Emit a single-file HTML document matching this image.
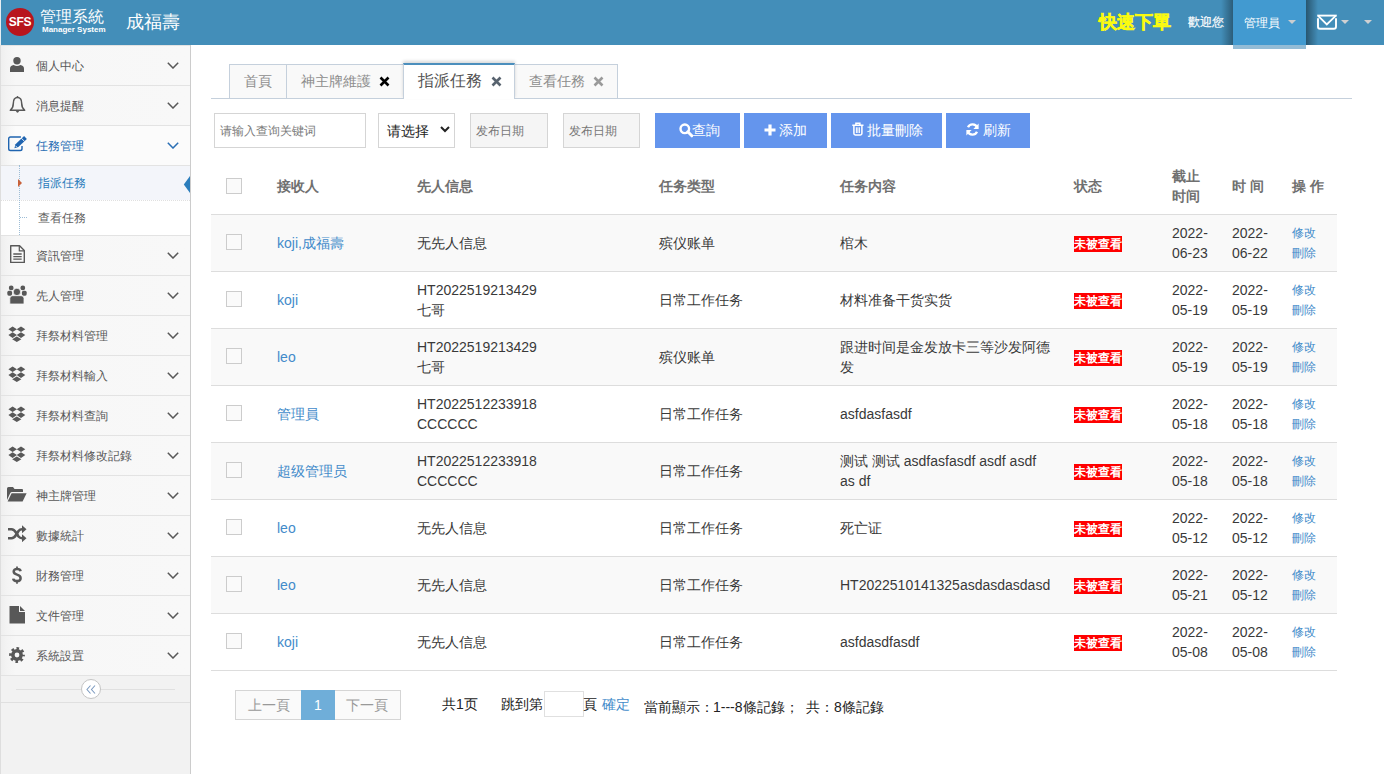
<!DOCTYPE html>
<html><head><meta charset="utf-8">
<style>
*{box-sizing:border-box}
html,body{margin:0;padding:0;width:1384px;height:774px;overflow:hidden;background:#fff;font-family:"Liberation Sans",sans-serif;font-size:13px;color:#393939}
.abs{position:absolute}
#nav{position:absolute;left:0;top:0;width:1384px;height:45px;background:#438eb9;z-index:10}
#side{position:absolute;left:0;top:45px;width:191px;height:729px;background:#f2f2f2;border-right:1px solid #ccc}
.mi{position:absolute;left:0;width:190px;height:40px;background:linear-gradient(90deg,#eeeeee 0px,#f3f3f3 6px,#f7f7f7 16px,#f8f8f8 100%);border-top:1px solid #e3e3e3}
.st{position:absolute;left:36px;font-size:12px;line-height:16px;white-space:nowrap}
.mi .ic{position:absolute;left:8px;top:11px;width:18px;height:18px}
.mi .ar{position:absolute;left:166px;top:14px;width:12px;height:12px}
#main{position:absolute;left:191px;top:45px;width:1193px;height:729px;background:#fff}
</style></head><body>
<div id="nav">
 <div class="abs" style="left:0;top:0;width:1px;height:45px;background:#e8eef2"></div>
 <div class="abs" style="left:6px;top:8px;width:28px;height:28px;border-radius:50%;background:#b8151d"></div>
 <div class="abs" style="left:6px;top:14px;width:28px;text-align:center;color:#fff;font-weight:bold;font-size:12px;line-height:16px;letter-spacing:-0.2px">SFS</div>
 <div class="abs" style="left:40px;top:7px;color:#fff;font-size:16px;line-height:19px;white-space:nowrap">管理系統</div>
 <div class="abs" style="left:42px;top:25px;color:#fff;font-size:8px;font-weight:bold;line-height:10px;white-space:nowrap;letter-spacing:0px">Manager System</div>
 <div class="abs" style="left:126px;top:11px;color:#fff;font-size:18px;line-height:22px;white-space:nowrap">成福壽</div>
 <div class="abs" style="left:1099px;top:11px;color:#fafa10;font-size:18px;font-weight:bold;line-height:22px;white-space:nowrap;-webkit-text-stroke:0.5px #fafa10">快速下單</div>
 <div class="abs" style="left:1188px;top:14px;color:#fff;font-size:12px;line-height:16px;white-space:nowrap;-webkit-text-stroke:0.2px #fff">歡迎您</div>
 <div class="abs" style="left:1221px;top:0;width:12px;height:45px;background:linear-gradient(90deg,rgba(0,0,0,0),rgba(0,0,0,.35))"></div>
 <div class="abs" style="left:1306px;top:0;width:12px;height:45px;background:linear-gradient(270deg,rgba(0,0,0,0),rgba(0,0,0,.4))"></div>
 <div class="abs" style="left:1233px;top:0;width:73px;height:49px;background:#93bcd6"></div>
 <div class="abs" style="left:1233px;top:0;width:73px;height:45px;background:#429ad0"></div>
 <div class="abs" style="left:1244px;top:15px;color:#fff;font-size:12px;line-height:16px;white-space:nowrap">管理員</div>
 <div class="abs" style="left:1288px;top:20px;width:0;height:0;border-left:4px solid transparent;border-right:4px solid transparent;border-top:4px solid #c9cdd0"></div>
 <svg class="abs" style="left:1317px;top:14px" width="20" height="17" viewBox="0 0 20 17"><path d="M0.2 1.6 H19.8" stroke="#fff" stroke-width="1.9"/><path d="M1.2 1.9 L9.8 10.4 L18.6 1.9" fill="none" stroke="#fff" stroke-width="1.8"/><path d="M1 4.3 V12.8 Q1 14.8 3 14.8 H17 Q19 14.8 19 12.8 V4.3" fill="none" stroke="#fff" stroke-width="1.9"/></svg>
 <div class="abs" style="left:1341px;top:20px;width:0;height:0;border-left:4px solid transparent;border-right:4px solid transparent;border-top:4px solid #cfd0d2"></div>
 <div class="abs" style="left:1364px;top:20px;width:0;height:0;border-left:4px solid transparent;border-right:4px solid transparent;border-top:4px solid #cfd0d2"></div>
</div>
<div id="side"></div>
<div class="mi" style="top:45px"></div><svg class="abs" style="left:10px;top:57px" width="14" height="15" viewBox="0 0 14 15"><circle cx="7" cy="3.7" r="3.7" fill="#585858"/><path d="M0 15 L0 11.8 Q0 8.3 3.6 7.9 Q7 10.2 10.4 7.9 Q14 8.3 14 11.8 L14 15 Z" fill="#585858"/></svg><div class="abs st" style="top:58px;color:#585858">個人中心</div><svg class="abs" style="left:167px;top:62px" width="12" height="7" viewBox="0 0 12 7"><path d="M0.8 0.8 L6 6 L11.2 0.8" fill="none" stroke="#585858" stroke-width="1.5"/></svg><div class="mi" style="top:85px"></div><svg class="abs" style="left:9px;top:95px" width="17" height="20" viewBox="0 0 17 20"><path d="M8.5 2.6 C5.2 2.6 4.3 5 4.3 8.5 C4.3 12 3.3 13.6 1.3 15.3 L15.7 15.3 C13.7 13.6 12.7 12 12.7 8.5 C12.7 5 11.8 2.6 8.5 2.6 Z" fill="none" stroke="#585858" stroke-width="1.5" stroke-linejoin="round"/><circle cx="8.5" cy="1.9" r="0.9" fill="#585858"/><path d="M6.8 16 Q8.5 19.6 10.2 16 Z" fill="#585858"/></svg><div class="abs st" style="top:98px;color:#585858">消息提醒</div><svg class="abs" style="left:167px;top:102px" width="12" height="7" viewBox="0 0 12 7"><path d="M0.8 0.8 L6 6 L11.2 0.8" fill="none" stroke="#585858" stroke-width="1.5"/></svg><div class="mi" style="top:125px;background:linear-gradient(90deg,#efefef 0px,#f6f6f6 8px,#fbfbfb 16px,#fbfbfb 100%)"></div><svg class="abs" style="left:8px;top:136px" width="20" height="16" viewBox="0 0 20 16"><path d="M12.9 1 L2.5 1 Q0.7 1 0.7 2.8 L0.7 12.7 Q0.7 14.5 2.5 14.5 L12.2 14.5 Q14 14.5 14 12.7 L14 10" fill="none" stroke="#1f64b0" stroke-width="1.4"/><path d="M6.4 12.2 L7.5 8.3 L16.1 0.1 L18.9 2.9 L10.3 11.1 Z" fill="#1f64b0"/><path d="M13.4 2.2 L16.6 5.5" stroke="#f8f8f8" stroke-width="0.9"/><path d="M7.6 9.9 L8.6 10.9" stroke="#f8f8f8" stroke-width="1"/></svg><div class="abs st" style="top:138px;color:#2a6fb5">任務管理</div><svg class="abs" style="left:167px;top:142px" width="12" height="7" viewBox="0 0 12 7"><path d="M0.8 0.8 L6 6 L11.2 0.8" fill="none" stroke="#2a6fb5" stroke-width="1.5"/></svg><div class="abs" style="left:0;top:165px;width:190px;height:70px;background:#fff"></div><div class="abs" style="left:0;top:165px;width:190px;height:35px;background:#f3f5fa"></div><div class="abs" style="left:0;top:165px;width:190px;height:1px;background:#e3e3e3"></div><div class="abs" style="left:0;top:200px;width:190px;height:0;border-top:1px dotted #e0e0e0"></div><div class="abs" style="left:19px;top:165px;width:0;height:70px;border-left:1px dotted #9dbdd6"></div><div class="abs" style="left:20px;top:217px;width:7px;height:0;border-top:1px dotted #9dbdd6"></div><div class="abs" style="left:18px;top:179px;width:0;height:0;border-top:4px solid transparent;border-bottom:4px solid transparent;border-left:4px solid #c86139"></div><div class="abs st" style="left:38px;top:175px;color:#2b7dbc">指派任務</div><div class="abs st" style="left:38px;top:210px;color:#616161">查看任務</div><svg class="abs" style="left:183px;top:176px" width="8" height="17" viewBox="0 0 8 17"><path d="M7 0 L0.8 8.5 L7 17 Z" fill="#2b7dbc"/></svg><div class="mi" style="top:235px"></div><svg class="abs" style="left:9px;top:245px" width="17" height="19" viewBox="0 0 17 19"><path d="M1.7 0.8 L10.6 0.8 L15.3 5.5 L15.3 17.4 L1.7 17.4 Z" fill="none" stroke="#585858" stroke-width="1.4" stroke-linejoin="round"/><path d="M10.3 1 L10.3 5.8 L15 5.8" fill="none" stroke="#585858" stroke-width="1.2"/><path d="M4.3 9 H12.7 M4.3 11.6 H12.7 M4.3 14.2 H12.7" stroke="#585858" stroke-width="1.3"/></svg><div class="abs st" style="top:248px;color:#585858">資訊管理</div><svg class="abs" style="left:167px;top:252px" width="12" height="7" viewBox="0 0 12 7"><path d="M0.8 0.8 L6 6 L11.2 0.8" fill="none" stroke="#585858" stroke-width="1.5"/></svg><div class="mi" style="top:275px"></div><svg class="abs" style="left:7px;top:285px" width="20" height="20" viewBox="0 0 20 20"><circle cx="4.2" cy="2.9" r="2.4" fill="#585858"/><circle cx="15.8" cy="2.9" r="2.4" fill="#585858"/><rect x="0.3" y="5.8" width="4.8" height="4.9" rx="1.6" fill="#585858"/><rect x="14.9" y="5.8" width="4.8" height="4.9" rx="1.6" fill="#585858"/><circle cx="9.9" cy="6.9" r="3.7" fill="#585858" stroke="#f8f8f8" stroke-width="0.8"/><path d="M2.8 19 L2.8 13.5 Q2.8 10.7 5.6 10.7 L14.2 10.7 Q17 10.7 17 13.5 L17 19 Z" fill="#585858" stroke="#f8f8f8" stroke-width="0.8"/></svg><div class="abs st" style="top:288px;color:#585858">先人管理</div><svg class="abs" style="left:167px;top:292px" width="12" height="7" viewBox="0 0 12 7"><path d="M0.8 0.8 L6 6 L11.2 0.8" fill="none" stroke="#585858" stroke-width="1.5"/></svg><div class="mi" style="top:315px"></div><svg class="abs" style="left:8px;top:326px" width="18" height="17" viewBox="0 0 18 17"><path d="M4.6 0.5 L8.9 3.2 L4.6 6 L0.4 3.2 Z M13 0.5 L17.3 3.2 L13 6 L8.7 3.2 Z M4.6 6.3 L8.9 9.1 L4.6 11.9 L0.4 9.1 Z M13 6.3 L17.3 9.1 L13 11.9 L8.7 9.1 Z M8.8 10.6 L13.4 13.3 L8.8 16 L4.2 13.3 Z" fill="#585858"/></svg><div class="abs st" style="top:328px;color:#585858">拜祭材料管理</div><svg class="abs" style="left:167px;top:332px" width="12" height="7" viewBox="0 0 12 7"><path d="M0.8 0.8 L6 6 L11.2 0.8" fill="none" stroke="#585858" stroke-width="1.5"/></svg><div class="mi" style="top:355px"></div><svg class="abs" style="left:8px;top:366px" width="18" height="17" viewBox="0 0 18 17"><path d="M4.6 0.5 L8.9 3.2 L4.6 6 L0.4 3.2 Z M13 0.5 L17.3 3.2 L13 6 L8.7 3.2 Z M4.6 6.3 L8.9 9.1 L4.6 11.9 L0.4 9.1 Z M13 6.3 L17.3 9.1 L13 11.9 L8.7 9.1 Z M8.8 10.6 L13.4 13.3 L8.8 16 L4.2 13.3 Z" fill="#585858"/></svg><div class="abs st" style="top:368px;color:#585858">拜祭材料輸入</div><svg class="abs" style="left:167px;top:372px" width="12" height="7" viewBox="0 0 12 7"><path d="M0.8 0.8 L6 6 L11.2 0.8" fill="none" stroke="#585858" stroke-width="1.5"/></svg><div class="mi" style="top:395px"></div><svg class="abs" style="left:8px;top:406px" width="18" height="17" viewBox="0 0 18 17"><path d="M4.6 0.5 L8.9 3.2 L4.6 6 L0.4 3.2 Z M13 0.5 L17.3 3.2 L13 6 L8.7 3.2 Z M4.6 6.3 L8.9 9.1 L4.6 11.9 L0.4 9.1 Z M13 6.3 L17.3 9.1 L13 11.9 L8.7 9.1 Z M8.8 10.6 L13.4 13.3 L8.8 16 L4.2 13.3 Z" fill="#585858"/></svg><div class="abs st" style="top:408px;color:#585858">拜祭材料查詢</div><svg class="abs" style="left:167px;top:412px" width="12" height="7" viewBox="0 0 12 7"><path d="M0.8 0.8 L6 6 L11.2 0.8" fill="none" stroke="#585858" stroke-width="1.5"/></svg><div class="mi" style="top:435px"></div><svg class="abs" style="left:8px;top:446px" width="18" height="17" viewBox="0 0 18 17"><path d="M4.6 0.5 L8.9 3.2 L4.6 6 L0.4 3.2 Z M13 0.5 L17.3 3.2 L13 6 L8.7 3.2 Z M4.6 6.3 L8.9 9.1 L4.6 11.9 L0.4 9.1 Z M13 6.3 L17.3 9.1 L13 11.9 L8.7 9.1 Z M8.8 10.6 L13.4 13.3 L8.8 16 L4.2 13.3 Z" fill="#585858"/></svg><div class="abs st" style="top:448px;color:#585858">拜祭材料修改記錄</div><svg class="abs" style="left:167px;top:452px" width="12" height="7" viewBox="0 0 12 7"><path d="M0.8 0.8 L6 6 L11.2 0.8" fill="none" stroke="#585858" stroke-width="1.5"/></svg><div class="mi" style="top:475px"></div><svg class="abs" style="left:7px;top:487px" width="20" height="15" viewBox="0 0 20 15"><path d="M0 1.5 Q0 0 1.5 0 L6 0 L7.5 2 L15 2 Q16 2 16 3 L16 5 L5 5 Q3.8 5 3.2 6.2 L0 13 Z" fill="#585858"/><path d="M4.6 6.3 L19.6 6.3 L15.6 14.4 L0.6 14.4 Z" fill="#585858"/></svg><div class="abs st" style="top:488px;color:#585858">神主牌管理</div><svg class="abs" style="left:167px;top:492px" width="12" height="7" viewBox="0 0 12 7"><path d="M0.8 0.8 L6 6 L11.2 0.8" fill="none" stroke="#585858" stroke-width="1.5"/></svg><div class="mi" style="top:515px"></div><svg class="abs" style="left:8px;top:525px" width="19" height="17" viewBox="0 0 19 17"><path d="M0 4.3 L3.5 4.3 Q6 4.3 8 7.5 L10.5 11.5 Q12 13.2 14 13.2 L15 13.2" fill="none" stroke="#585858" stroke-width="2.6"/><path d="M0 13.2 L3.5 13.2 Q6 13.2 8 10 L10.5 6 Q12 4.3 14 4.3 L15 4.3" fill="none" stroke="#585858" stroke-width="2.6"/><path d="M14 0.3 L18.5 4.3 L14 8.3 Z M14 9.2 L18.5 13.2 L14 17.2 Z" fill="#585858"/></svg><div class="abs st" style="top:528px;color:#585858">數據統計</div><svg class="abs" style="left:167px;top:532px" width="12" height="7" viewBox="0 0 12 7"><path d="M0.8 0.8 L6 6 L11.2 0.8" fill="none" stroke="#585858" stroke-width="1.5"/></svg><div class="mi" style="top:555px"></div><svg class="abs" style="left:12px;top:566px" width="10" height="19" viewBox="0 0 10 19"><path d="M8.6 5.2 Q8.2 3.1 5 3.1 Q1.7 3.1 1.7 5.6 Q1.7 7.8 5 8.6 Q8.6 9.4 8.6 12.2 Q8.6 15.1 5 15.1 Q1.6 15.1 1.2 12.6" fill="none" stroke="#585858" stroke-width="2.5"/><path d="M5 0.5 V3.2 M5 15 V17.8" stroke="#585858" stroke-width="1.7"/></svg><div class="abs st" style="top:568px;color:#585858">財務管理</div><svg class="abs" style="left:167px;top:572px" width="12" height="7" viewBox="0 0 12 7"><path d="M0.8 0.8 L6 6 L11.2 0.8" fill="none" stroke="#585858" stroke-width="1.5"/></svg><div class="mi" style="top:595px"></div><svg class="abs" style="left:9px;top:606px" width="17" height="18" viewBox="0 0 17 18"><path d="M0.5 0 L10 0 L10 6 L16 6 L16 17.5 L0.5 17.5 Z" fill="#585858"/><path d="M11 0 L16 5 L11 5 Z" fill="#585858"/></svg><div class="abs st" style="top:608px;color:#585858">文件管理</div><svg class="abs" style="left:167px;top:612px" width="12" height="7" viewBox="0 0 12 7"><path d="M0.8 0.8 L6 6 L11.2 0.8" fill="none" stroke="#585858" stroke-width="1.5"/></svg><div class="mi" style="top:635px"></div><svg class="abs" style="left:9px;top:647px" width="16" height="16" viewBox="0 0 16 16"><circle cx="8" cy="8" r="4.15" fill="none" stroke="#585858" stroke-width="3.5"/><circle cx="8" cy="8" r="6.3" fill="none" stroke="#585858" stroke-width="3.2" stroke-dasharray="2.5 2.447" stroke-dashoffset="1.25"/></svg><div class="abs st" style="top:648px;color:#585858">系統設置</div><svg class="abs" style="left:167px;top:652px" width="12" height="7" viewBox="0 0 12 7"><path d="M0.8 0.8 L6 6 L11.2 0.8" fill="none" stroke="#585858" stroke-width="1.5"/></svg><div class="abs" style="left:0;top:675px;width:190px;height:28px;background:#f2f2f2;border-top:1px solid #e3e3e3;border-bottom:1px solid #e0e0e0"></div><div class="abs" style="left:0;top:45px;width:1px;height:729px;background:#dedede"></div><div class="abs" style="left:16px;top:689px;width:159px;height:1px;background:#e0e0e0"></div><div class="abs" style="left:81px;top:679px;width:20px;height:20px;border-radius:50%;background:#fff;border:1px solid #c4c4c4"></div><svg class="abs" style="left:86px;top:685px" width="10" height="9" viewBox="0 0 10 9"><path d="M4.5 0.5 L1 4.5 L4.5 8.5 M9 0.5 L5.5 4.5 L9 8.5" fill="none" stroke="#7f9cc0" stroke-width="1.1"/></svg>
<div id="main"></div>
<div class="abs" style="left:211px;top:98px;width:1141px;height:1px;background:#c5d0dc"></div><div class="abs" style="left:229px;top:64px;width:58px;height:35px;background:#f9f9f9;border:1px solid #c5d0dc"></div><div class="abs" style="left:244px;top:72px;font-size:14px;line-height:18px;color:#8d8d8d;white-space:nowrap">首頁</div><div class="abs" style="left:286px;top:64px;width:118px;height:35px;background:#f9f9f9;border:1px solid #c5d0dc"></div><div class="abs" style="left:301px;top:72px;font-size:14px;line-height:18px;color:#8d8d8d;white-space:nowrap">神主牌維護</div><svg class="abs" style="left:379px;top:76px" width="11" height="11" viewBox="0 0 11 11"><path d="M1.5 1.5 L9.5 9.5 M9.5 1.5 L1.5 9.5" stroke="#000" stroke-width="2.6" stroke-linecap="butt"/></svg><div class="abs" style="left:514px;top:64px;width:104px;height:35px;background:#f9f9f9;border:1px solid #c5d0dc"></div><div class="abs" style="left:529px;top:72px;font-size:14px;line-height:18px;color:#8d8d8d;white-space:nowrap">查看任務</div><svg class="abs" style="left:593px;top:76px" width="11" height="11" viewBox="0 0 11 11"><path d="M1.5 1.5 L9.5 9.5 M9.5 1.5 L1.5 9.5" stroke="#9a9a9a" stroke-width="2.6" stroke-linecap="butt"/></svg><div class="abs" style="left:403px;top:63px;width:112px;height:36px;background:#fff;border:1px solid #c5d0dc;border-top:2px solid #4c8fbd;border-bottom:0;box-shadow:0 -2px 3px rgba(0,0,0,.15)"></div><div class="abs" style="left:418px;top:71px;font-size:16px;line-height:20px;color:#555;white-space:nowrap">指派任務</div><svg class="abs" style="left:491px;top:76px" width="11" height="11" viewBox="0 0 11 11"><path d="M1.5 1.5 L9.5 9.5 M9.5 1.5 L1.5 9.5" stroke="#58636f" stroke-width="2.6" stroke-linecap="butt"/></svg><div class="abs" style="left:214px;top:113px;width:152px;height:35px;border:1px solid #d5d5d5;background:#fff"></div><div class="abs" style="left:220px;top:123px;font-size:12px;line-height:16px;color:#7a7a7a;white-space:nowrap">请输入查询关键词</div><div class="abs" style="left:378px;top:113px;width:77px;height:35px;border:1px solid #d5d5d5;background:#fff"></div><div class="abs" style="left:387px;top:122px;font-size:14px;line-height:18px;color:#222;white-space:nowrap">请选择</div><svg class="abs" style="left:440px;top:126px" width="10" height="7" viewBox="0 0 10 7"><path d="M1 1 L5 5 L9 1" fill="none" stroke="#222" stroke-width="2"/></svg><div class="abs" style="left:470px;top:113px;width:78px;height:35px;border:1px solid #d5d5d5;background:#f5f5f5"></div><div class="abs" style="left:476px;top:123px;font-size:12px;line-height:16px;color:#777;white-space:nowrap">发布日期</div><div class="abs" style="left:563px;top:113px;width:77px;height:35px;border:1px solid #d5d5d5;background:#f5f5f5"></div><div class="abs" style="left:569px;top:123px;font-size:12px;line-height:16px;color:#777;white-space:nowrap">发布日期</div><div class="abs" style="left:655px;top:113px;width:85px;height:35px;background:#6495ed"></div><div class="abs" style="left:692px;top:121px;font-size:14px;line-height:18px;color:#fff;white-space:nowrap">查詢</div><div class="abs" style="left:744px;top:113px;width:83px;height:35px;background:#6495ed"></div><div class="abs" style="left:779px;top:121px;font-size:14px;line-height:18px;color:#fff;white-space:nowrap">添加</div><div class="abs" style="left:831px;top:113px;width:111px;height:35px;background:#6495ed"></div><div class="abs" style="left:867px;top:121px;font-size:14px;line-height:18px;color:#fff;white-space:nowrap">批量刪除</div><div class="abs" style="left:946px;top:113px;width:84px;height:35px;background:#6495ed"></div><div class="abs" style="left:983px;top:121px;font-size:14px;line-height:18px;color:#fff;white-space:nowrap">刷新</div><svg class="abs" style="left:679px;top:123px" width="14" height="15" viewBox="0 0 14 15"><circle cx="5.8" cy="5.8" r="4.3" fill="none" stroke="#fff" stroke-width="2.4"/><path d="M8.8 8.8 L12.8 12.8" stroke="#fff" stroke-width="3" stroke-linecap="round"/></svg><svg class="abs" style="left:764px;top:124px" width="12" height="12" viewBox="0 0 12 12"><path d="M6 0.5 V11.5 M0.5 6 H11.5" stroke="#fff" stroke-width="3.2"/></svg><svg class="abs" style="left:852px;top:122px" width="12" height="14" viewBox="0 0 12 14"><path d="M0.3 3.2 H11.5 M3.9 3 V1.2 H7.9 V3" fill="none" stroke="#fff" stroke-width="1.5"/><path d="M1.9 3.5 V11.6 Q1.9 13 3.3 13 H8.5 Q9.9 13 9.9 11.6 V3.5" fill="none" stroke="#fff" stroke-width="1.5"/><path d="M4.4 5.3 V11 M5.9 5.3 V11 M7.4 5.3 V11" stroke="#fff" stroke-width="1"/></svg><svg class="abs" style="left:966px;top:123px" width="13" height="13" viewBox="0 0 13 13"><path d="M11.2 4.6 A5 5 0 0 0 2 4.2" fill="none" stroke="#fff" stroke-width="2.3"/><path d="M12.6 0.5 L12.6 6 L7.4 6 Z" fill="#fff"/><path d="M1.8 8.4 A5 5 0 0 0 11 8.8" fill="none" stroke="#fff" stroke-width="2.3"/><path d="M0.4 12.5 L0.4 7 L5.6 7 Z" fill="#fff"/></svg><div class="abs" style="left:226px;top:178px;width:16px;height:16px;border:1px solid #ccc;background:#fafafa"></div><div class="abs" style="left:277px;top:176px;font-size:14px;line-height:20px;color:#707070;font-weight:bold;white-space:nowrap">接收人</div><div class="abs" style="left:417px;top:176px;font-size:14px;line-height:20px;color:#707070;font-weight:bold;white-space:nowrap">先人信息</div><div class="abs" style="left:659px;top:176px;font-size:14px;line-height:20px;color:#707070;font-weight:bold;white-space:nowrap">任务类型</div><div class="abs" style="left:840px;top:176px;font-size:14px;line-height:20px;color:#707070;font-weight:bold;white-space:nowrap">任务内容</div><div class="abs" style="left:1074px;top:176px;font-size:14px;line-height:20px;color:#707070;font-weight:bold;white-space:nowrap">状态</div><div class="abs" style="left:1172px;top:166px;font-size:14px;line-height:20px;color:#707070;font-weight:bold;white-space:nowrap">截止<br>时间</div><div class="abs" style="left:1232px;top:176px;font-size:14px;line-height:20px;color:#707070;font-weight:bold;white-space:nowrap">时&nbsp;间</div><div class="abs" style="left:1292px;top:176px;font-size:14px;line-height:20px;color:#707070;font-weight:bold;white-space:nowrap">操&nbsp;作</div><div class="abs" style="left:211px;top:214px;width:1126px;height:1px;background:#ddd"></div><div class="abs" style="left:211px;top:215px;width:1126px;height:56px;background:#f9f9f9"></div><div class="abs" style="left:211px;top:271px;width:1126px;height:1px;background:#ddd"></div><div class="abs" style="left:226px;top:234px;width:16px;height:16px;border:1px solid #ccc;background:#fafafa"></div><div class="abs" style="left:277px;top:232.5px;font-size:14px;line-height:20px;color:#428bca;white-space:nowrap">koji,成福壽</div><div class="abs" style="left:417px;top:232.5px;font-size:14px;line-height:20px;color:#393939;white-space:nowrap">无先人信息</div><div class="abs" style="left:659px;top:232.5px;font-size:14px;line-height:20px;color:#393939;white-space:nowrap">殡仪账单</div><div class="abs" style="left:840px;top:232.5px;font-size:14px;line-height:20px;color:#393939;white-space:nowrap">棺木</div><div class="abs" style="left:1074px;top:236px;width:48px;height:16px;background:#f00;color:#fff;font-weight:bold;font-size:12px;line-height:16px;text-align:center;white-space:nowrap">未被查看</div><div class="abs" style="left:1172px;top:222.5px;font-size:14px;line-height:20px;color:#393939;white-space:nowrap">2022-<br>06-23</div><div class="abs" style="left:1232px;top:222.5px;font-size:14px;line-height:20px;color:#393939;white-space:nowrap">2022-<br>06-22</div><div class="abs" style="left:1292px;top:222.5px;font-size:12px;line-height:20px;color:#428bca;white-space:nowrap">修改<br>刪除</div><div class="abs" style="left:211px;top:272px;width:1126px;height:56px;background:#fff"></div><div class="abs" style="left:211px;top:328px;width:1126px;height:1px;background:#ddd"></div><div class="abs" style="left:226px;top:291px;width:16px;height:16px;border:1px solid #ccc;background:#fafafa"></div><div class="abs" style="left:277px;top:289.5px;font-size:14px;line-height:20px;color:#428bca;white-space:nowrap">koji</div><div class="abs" style="left:417px;top:279.5px;font-size:14px;line-height:20px;color:#393939;white-space:nowrap">HT2022519213429<br>七哥</div><div class="abs" style="left:659px;top:289.5px;font-size:14px;line-height:20px;color:#393939;white-space:nowrap">日常工作任务</div><div class="abs" style="left:840px;top:289.5px;font-size:14px;line-height:20px;color:#393939;white-space:nowrap">材料准备干货实货</div><div class="abs" style="left:1074px;top:293px;width:48px;height:16px;background:#f00;color:#fff;font-weight:bold;font-size:12px;line-height:16px;text-align:center;white-space:nowrap">未被查看</div><div class="abs" style="left:1172px;top:279.5px;font-size:14px;line-height:20px;color:#393939;white-space:nowrap">2022-<br>05-19</div><div class="abs" style="left:1232px;top:279.5px;font-size:14px;line-height:20px;color:#393939;white-space:nowrap">2022-<br>05-19</div><div class="abs" style="left:1292px;top:279.5px;font-size:12px;line-height:20px;color:#428bca;white-space:nowrap">修改<br>刪除</div><div class="abs" style="left:211px;top:329px;width:1126px;height:56px;background:#f9f9f9"></div><div class="abs" style="left:211px;top:385px;width:1126px;height:1px;background:#ddd"></div><div class="abs" style="left:226px;top:348px;width:16px;height:16px;border:1px solid #ccc;background:#fafafa"></div><div class="abs" style="left:277px;top:346.5px;font-size:14px;line-height:20px;color:#428bca;white-space:nowrap">leo</div><div class="abs" style="left:417px;top:336.5px;font-size:14px;line-height:20px;color:#393939;white-space:nowrap">HT2022519213429<br>七哥</div><div class="abs" style="left:659px;top:346.5px;font-size:14px;line-height:20px;color:#393939;white-space:nowrap">殡仪账单</div><div class="abs" style="left:840px;top:336.5px;font-size:14px;line-height:20px;color:#393939;white-space:nowrap">跟进时间是金发放卡三等沙发阿德<br>发</div><div class="abs" style="left:1074px;top:350px;width:48px;height:16px;background:#f00;color:#fff;font-weight:bold;font-size:12px;line-height:16px;text-align:center;white-space:nowrap">未被查看</div><div class="abs" style="left:1172px;top:336.5px;font-size:14px;line-height:20px;color:#393939;white-space:nowrap">2022-<br>05-19</div><div class="abs" style="left:1232px;top:336.5px;font-size:14px;line-height:20px;color:#393939;white-space:nowrap">2022-<br>05-19</div><div class="abs" style="left:1292px;top:336.5px;font-size:12px;line-height:20px;color:#428bca;white-space:nowrap">修改<br>刪除</div><div class="abs" style="left:211px;top:386px;width:1126px;height:56px;background:#fff"></div><div class="abs" style="left:211px;top:442px;width:1126px;height:1px;background:#ddd"></div><div class="abs" style="left:226px;top:405px;width:16px;height:16px;border:1px solid #ccc;background:#fafafa"></div><div class="abs" style="left:277px;top:403.5px;font-size:14px;line-height:20px;color:#428bca;white-space:nowrap">管理員</div><div class="abs" style="left:417px;top:393.5px;font-size:14px;line-height:20px;color:#393939;white-space:nowrap">HT2022512233918<br>CCCCCC</div><div class="abs" style="left:659px;top:403.5px;font-size:14px;line-height:20px;color:#393939;white-space:nowrap">日常工作任务</div><div class="abs" style="left:840px;top:403.5px;font-size:14px;line-height:20px;color:#393939;white-space:nowrap">asfdasfasdf</div><div class="abs" style="left:1074px;top:407px;width:48px;height:16px;background:#f00;color:#fff;font-weight:bold;font-size:12px;line-height:16px;text-align:center;white-space:nowrap">未被查看</div><div class="abs" style="left:1172px;top:393.5px;font-size:14px;line-height:20px;color:#393939;white-space:nowrap">2022-<br>05-18</div><div class="abs" style="left:1232px;top:393.5px;font-size:14px;line-height:20px;color:#393939;white-space:nowrap">2022-<br>05-18</div><div class="abs" style="left:1292px;top:393.5px;font-size:12px;line-height:20px;color:#428bca;white-space:nowrap">修改<br>刪除</div><div class="abs" style="left:211px;top:443px;width:1126px;height:56px;background:#f9f9f9"></div><div class="abs" style="left:211px;top:499px;width:1126px;height:1px;background:#ddd"></div><div class="abs" style="left:226px;top:462px;width:16px;height:16px;border:1px solid #ccc;background:#fafafa"></div><div class="abs" style="left:277px;top:460.5px;font-size:14px;line-height:20px;color:#428bca;white-space:nowrap">超级管理员</div><div class="abs" style="left:417px;top:450.5px;font-size:14px;line-height:20px;color:#393939;white-space:nowrap">HT2022512233918<br>CCCCCC</div><div class="abs" style="left:659px;top:460.5px;font-size:14px;line-height:20px;color:#393939;white-space:nowrap">日常工作任务</div><div class="abs" style="left:840px;top:450.5px;font-size:14px;line-height:20px;color:#393939;white-space:nowrap">测试 测试 asdfasfasdf asdf asdf<br>as df</div><div class="abs" style="left:1074px;top:464px;width:48px;height:16px;background:#f00;color:#fff;font-weight:bold;font-size:12px;line-height:16px;text-align:center;white-space:nowrap">未被查看</div><div class="abs" style="left:1172px;top:450.5px;font-size:14px;line-height:20px;color:#393939;white-space:nowrap">2022-<br>05-18</div><div class="abs" style="left:1232px;top:450.5px;font-size:14px;line-height:20px;color:#393939;white-space:nowrap">2022-<br>05-18</div><div class="abs" style="left:1292px;top:450.5px;font-size:12px;line-height:20px;color:#428bca;white-space:nowrap">修改<br>刪除</div><div class="abs" style="left:211px;top:500px;width:1126px;height:56px;background:#fff"></div><div class="abs" style="left:211px;top:556px;width:1126px;height:1px;background:#ddd"></div><div class="abs" style="left:226px;top:519px;width:16px;height:16px;border:1px solid #ccc;background:#fafafa"></div><div class="abs" style="left:277px;top:517.5px;font-size:14px;line-height:20px;color:#428bca;white-space:nowrap">leo</div><div class="abs" style="left:417px;top:517.5px;font-size:14px;line-height:20px;color:#393939;white-space:nowrap">无先人信息</div><div class="abs" style="left:659px;top:517.5px;font-size:14px;line-height:20px;color:#393939;white-space:nowrap">日常工作任务</div><div class="abs" style="left:840px;top:517.5px;font-size:14px;line-height:20px;color:#393939;white-space:nowrap">死亡证</div><div class="abs" style="left:1074px;top:521px;width:48px;height:16px;background:#f00;color:#fff;font-weight:bold;font-size:12px;line-height:16px;text-align:center;white-space:nowrap">未被查看</div><div class="abs" style="left:1172px;top:507.5px;font-size:14px;line-height:20px;color:#393939;white-space:nowrap">2022-<br>05-12</div><div class="abs" style="left:1232px;top:507.5px;font-size:14px;line-height:20px;color:#393939;white-space:nowrap">2022-<br>05-12</div><div class="abs" style="left:1292px;top:507.5px;font-size:12px;line-height:20px;color:#428bca;white-space:nowrap">修改<br>刪除</div><div class="abs" style="left:211px;top:557px;width:1126px;height:56px;background:#f9f9f9"></div><div class="abs" style="left:211px;top:613px;width:1126px;height:1px;background:#ddd"></div><div class="abs" style="left:226px;top:576px;width:16px;height:16px;border:1px solid #ccc;background:#fafafa"></div><div class="abs" style="left:277px;top:574.5px;font-size:14px;line-height:20px;color:#428bca;white-space:nowrap">leo</div><div class="abs" style="left:417px;top:574.5px;font-size:14px;line-height:20px;color:#393939;white-space:nowrap">无先人信息</div><div class="abs" style="left:659px;top:574.5px;font-size:14px;line-height:20px;color:#393939;white-space:nowrap">日常工作任务</div><div class="abs" style="left:840px;top:574.5px;font-size:14px;line-height:20px;color:#393939;white-space:nowrap">HT2022510141325asdasdasdasd</div><div class="abs" style="left:1074px;top:578px;width:48px;height:16px;background:#f00;color:#fff;font-weight:bold;font-size:12px;line-height:16px;text-align:center;white-space:nowrap">未被查看</div><div class="abs" style="left:1172px;top:564.5px;font-size:14px;line-height:20px;color:#393939;white-space:nowrap">2022-<br>05-21</div><div class="abs" style="left:1232px;top:564.5px;font-size:14px;line-height:20px;color:#393939;white-space:nowrap">2022-<br>05-12</div><div class="abs" style="left:1292px;top:564.5px;font-size:12px;line-height:20px;color:#428bca;white-space:nowrap">修改<br>刪除</div><div class="abs" style="left:211px;top:614px;width:1126px;height:56px;background:#fff"></div><div class="abs" style="left:211px;top:670px;width:1126px;height:1px;background:#ddd"></div><div class="abs" style="left:226px;top:633px;width:16px;height:16px;border:1px solid #ccc;background:#fafafa"></div><div class="abs" style="left:277px;top:631.5px;font-size:14px;line-height:20px;color:#428bca;white-space:nowrap">koji</div><div class="abs" style="left:417px;top:631.5px;font-size:14px;line-height:20px;color:#393939;white-space:nowrap">无先人信息</div><div class="abs" style="left:659px;top:631.5px;font-size:14px;line-height:20px;color:#393939;white-space:nowrap">日常工作任务</div><div class="abs" style="left:840px;top:631.5px;font-size:14px;line-height:20px;color:#393939;white-space:nowrap">asfdasdfasdf</div><div class="abs" style="left:1074px;top:635px;width:48px;height:16px;background:#f00;color:#fff;font-weight:bold;font-size:12px;line-height:16px;text-align:center;white-space:nowrap">未被查看</div><div class="abs" style="left:1172px;top:621.5px;font-size:14px;line-height:20px;color:#393939;white-space:nowrap">2022-<br>05-08</div><div class="abs" style="left:1232px;top:621.5px;font-size:14px;line-height:20px;color:#393939;white-space:nowrap">2022-<br>05-08</div><div class="abs" style="left:1292px;top:621.5px;font-size:12px;line-height:20px;color:#428bca;white-space:nowrap">修改<br>刪除</div><div class="abs" style="left:235px;top:690px;width:166px;height:30px;border:1px solid #d5d5d5;background:#fafafa"></div><div class="abs" style="left:301px;top:690px;width:34px;height:30px;background:#6faed9"></div><div class="abs" style="left:248px;top:695px;font-size:14px;line-height:20px;color:#999;white-space:nowrap">上一頁</div><div class="abs" style="left:301px;top:695px;font-size:14px;line-height:20px;color:#fff;white-space:nowrap"><span style="display:inline-block;width:34px;text-align:center">1</span></div><div class="abs" style="left:346px;top:695px;font-size:14px;line-height:20px;color:#999;white-space:nowrap">下一頁</div><div class="abs" style="left:442px;top:694px;font-size:14px;line-height:20px;color:#222;white-space:nowrap">共1页</div><div class="abs" style="left:501px;top:694px;font-size:14px;line-height:20px;color:#222;white-space:nowrap">跳到第</div><div class="abs" style="left:544px;top:691px;width:40px;height:26px;border:1px solid #e0e0e0;background:#fff"></div><div class="abs" style="left:583px;top:694px;font-size:14px;line-height:20px;color:#222;white-space:nowrap">頁</div><div class="abs" style="left:602px;top:694px;font-size:14px;line-height:20px;color:#428bca;white-space:nowrap">確定</div><div class="abs" style="left:644px;top:697px;font-size:14px;line-height:20px;color:#222;white-space:nowrap">當前顯示：</div><div class="abs" style="left:713px;top:697px;font-size:14px;line-height:20px;color:#222;white-space:nowrap">1---8條記錄；</div><div class="abs" style="left:806px;top:697px;font-size:14px;line-height:20px;color:#222;white-space:nowrap">共：</div><div class="abs" style="left:834px;top:697px;font-size:14px;line-height:20px;color:#222;white-space:nowrap">8條記錄</div>
</body></html>
